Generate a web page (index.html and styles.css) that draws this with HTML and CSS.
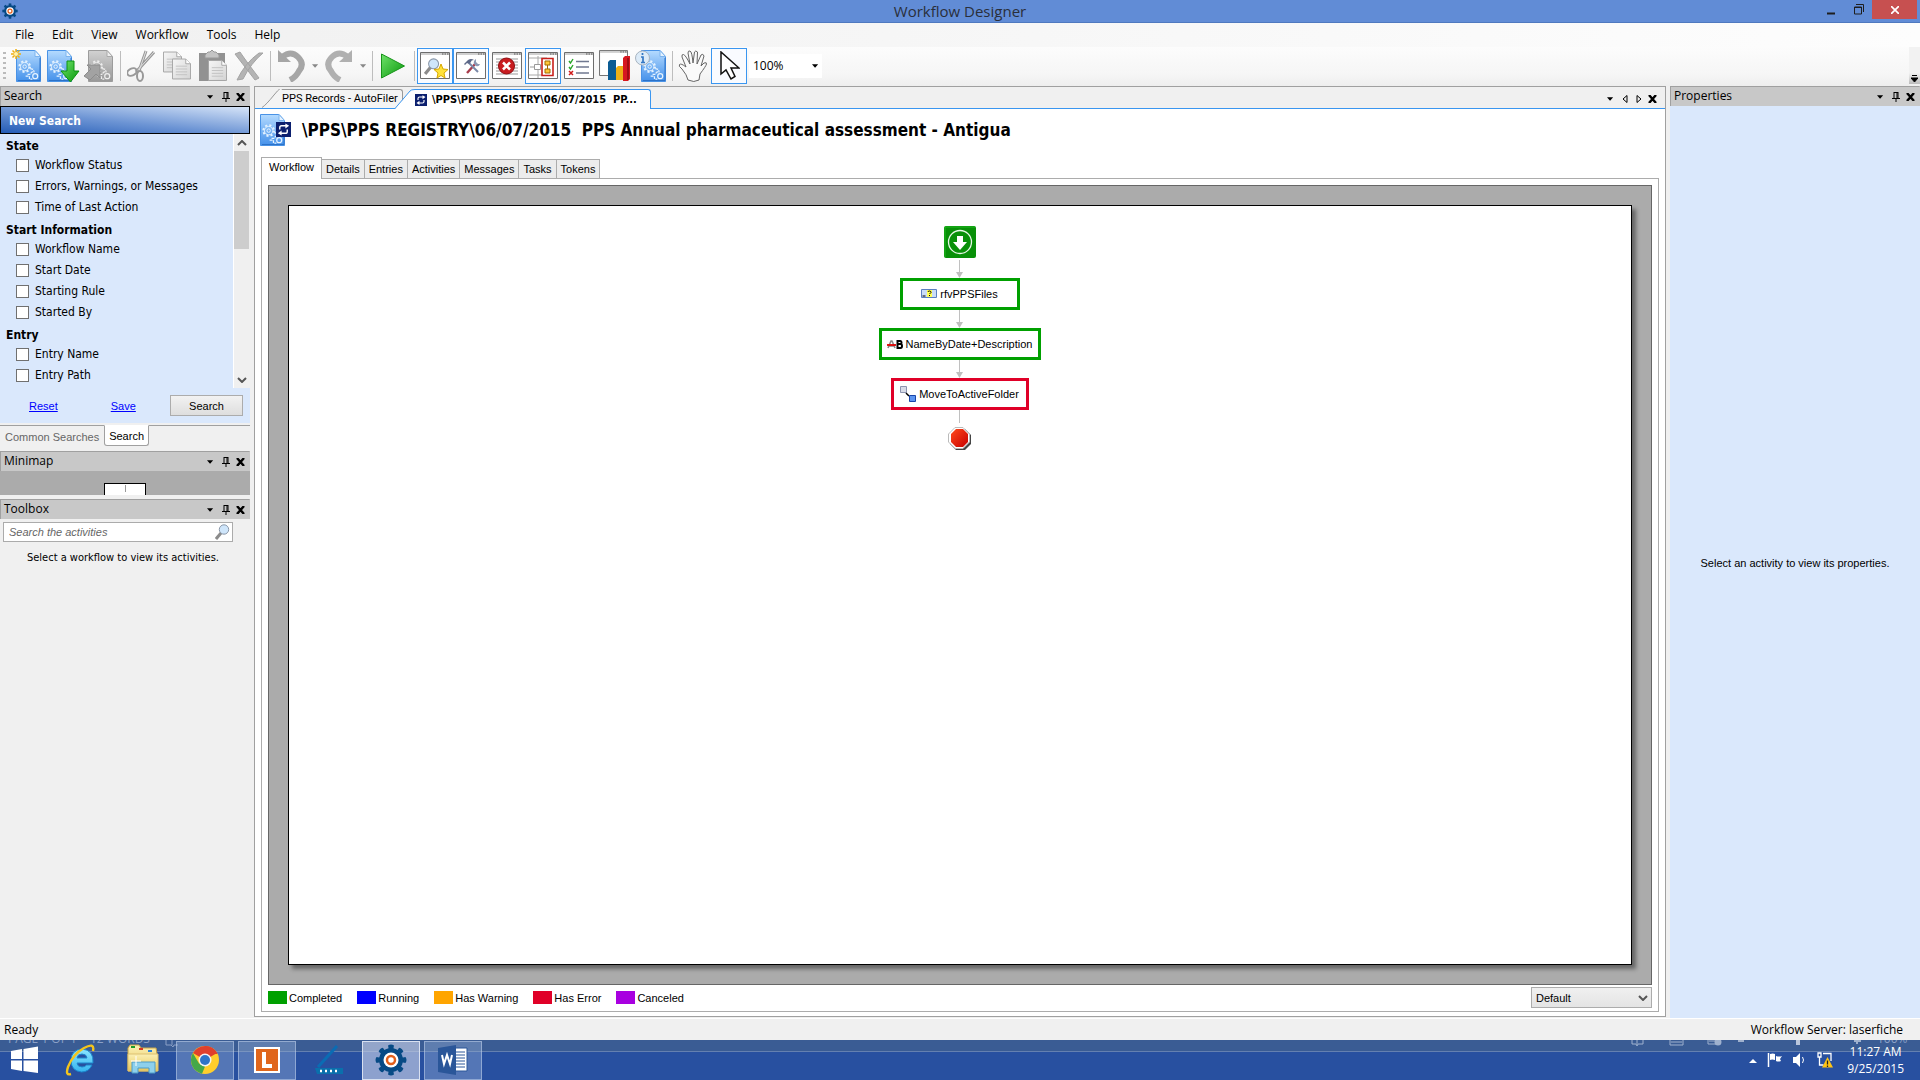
FILE: index.html
```html
<!DOCTYPE html>
<html lang="en">
<head>
<meta charset="utf-8">
<title>Workflow Designer</title>
<link rel="stylesheet" href="styles.css">
</head>
<body>
<svg class="defs" aria-hidden="true">
  <defs>
    <linearGradient id="gBlue" x1="0" y1="0" x2="0" y2="1"><stop offset="0" stop-color="#b5dbff"/><stop offset="1" stop-color="#4390ea"/></linearGradient>
    <linearGradient id="gGrey" x1="0" y1="0" x2="0" y2="1"><stop offset="0" stop-color="#d2d2d2"/><stop offset="1" stop-color="#989898"/></linearGradient>
    <linearGradient id="gGreen" x1="0" y1="0" x2="1" y2="1"><stop offset="0" stop-color="#6fe26a"/><stop offset="1" stop-color="#09980c"/></linearGradient>
    <linearGradient id="gPaper" x1="0" y1="0" x2="1" y2="1"><stop offset="0" stop-color="#f6f6f6"/><stop offset="1" stop-color="#d4d4d4"/></linearGradient>
    <linearGradient id="gFolder" x1="0" y1="0" x2="0" y2="1"><stop offset="0" stop-color="#fbf0b4"/><stop offset="1" stop-color="#e8c75c"/></linearGradient>
    <linearGradient id="gIe" x1="0" y1="0" x2="0" y2="1"><stop offset="0" stop-color="#8be6ff"/><stop offset="1" stop-color="#35b4f0"/></linearGradient>
    <linearGradient id="gStop" x1="0" y1="0" x2="1" y2="1"><stop offset="0" stop-color="#ff4a1c"/><stop offset="1" stop-color="#c80000"/></linearGradient>
    <symbol id="gears" viewBox="0 0 24 24">
      <g fill="none" stroke="currentColor">
        <circle cx="8" cy="9" r="5.6" stroke-width="2" stroke-dasharray="2.2 2.2"/>
        <circle cx="8" cy="9" r="4.4"/><circle cx="8" cy="9" r="1.8"/>
        <circle cx="19" cy="19" r="2.6" stroke-width="1.3"/>
        <path d="M11 17h3l1-2 2-1M9 19h4v3h3M14 11l3 1 1 3" stroke-width="1.3" stroke-dasharray="3 1"/>
      </g>
    </symbol>
    <symbol id="doc" viewBox="0 0 25 32">
      <path d="M.5.5H19l5.500 6v25H.5z" fill="url(#gBlue)" stroke="#4a93e6"/>
      <path d="M19 .5l5.500 6H19z" fill="#e4f2ff" stroke="#7db4ee"/>
      <path d="M2 30.500h22V8" fill="none" stroke="#2c72c8"/>
      <use href="#gears" x="1" y="8" width="23" height="23" color="#e6f3ff"/>
    </symbol>
    <symbol id="docgrey" viewBox="0 0 25 32">
      <path d="M.5.5H19l5.500 6v25H.5z" fill="url(#gGrey)" stroke="#9c9c9c"/>
      <path d="M19 .5l5.500 6H19z" fill="#eee" stroke="#aaa"/>
      <use href="#gears" x="1" y="8" width="23" height="23" color="#eee"/>
    </symbol>
    <symbol id="win" viewBox="0 0 30 27">
      <path d="M.5.5h29v26H.5z" fill="#fff" stroke="#6d6d6d"/><path d="M1 1h28v2H1z" fill="#d0d0d0"/>
      <path d="M22 2h1.500m1 0H26m1 0h1.500" stroke="#555"/>
    </symbol>
    <symbol id="sheet" viewBox="0 0 20 22">
      <path d="M.5.5h14l5 5v16H.5z" fill="url(#gPaper)" stroke="#a4a4a4"/><path d="M14.500.5v5h5" fill="#fff" stroke="#a4a4a4"/>
      <path d="M4 8h12M4 11h12M4 14h12M4 17h12" stroke="#c2c2c2"/>
    </symbol>
    <symbol id="gear" viewBox="0 0 32 32">
      <g fill="#074a85"><circle cx="16" cy="16" r="12"/>
        <path id="t" d="M13 1.500q3-2 6 0l-1 5h-4z"/><use href="#t" transform="rotate(45 16 16)"/><use href="#t" transform="rotate(90 16 16)"/><use href="#t" transform="rotate(135 16 16)"/><use href="#t" transform="rotate(180 16 16)"/><use href="#t" transform="rotate(225 16 16)"/><use href="#t" transform="rotate(270 16 16)"/><use href="#t" transform="rotate(315 16 16)"/></g>
      <circle cx="16" cy="16" r="7.500" fill="#fff"/><circle cx="16" cy="16" r="4" fill="none" stroke="#e2601c" stroke-width="2.500"/>
    </symbol>
    <symbol id="down" viewBox="0 0 8 4"><path d="M0 0h7L3.500 4z" fill="currentColor"/></symbol>
    <symbol id="pin" viewBox="0 0 8 10"><path d="M2 .5h4M2 0v6M5 0v6M6 0v6M0 6.500h8M4 6v4" stroke="#000" fill="none"/></symbol>
    <symbol id="x" viewBox="0 0 9 8"><path d="M1 0l7 8M8 0L1 8" stroke="#000" stroke-width="2.400"/></symbol>
    <symbol id="chev" viewBox="0 0 10 6"><path d="M1 1l4 4 4-4" stroke="#555" stroke-width="2" fill="none"/></symbol>
    <symbol id="sync" viewBox="0 0 16 16"><path d="M0 0h16v16H0z" fill="#0b1f6e"/><path d="M4 8V6q0-2 2-2h5M12 8v2q0 2-2 2H5" fill="none" stroke="#fff" stroke-width="1.500"/><path d="M10 1.500l4 2.500-4 3zM6 9l-4 3 4 2.500z" fill="#fff"/></symbol>
    <symbol id="lens" viewBox="0 0 15 16"><path d="M6 9L1 15" stroke="#8b8b8b" stroke-width="3"/><circle cx="9" cy="5.500" r="4.700" fill="#cfe6fb" stroke="#8a97a8"/></symbol>
  </defs>
</svg>

<header class="titlebar">
  <svg class="app-icon" width="16" height="16"><use href="#gear"/></svg>
  <h1 class="app-title">Workflow Designer</h1>
  <div class="win-buttons">
    <button class="win-btn" aria-label="Minimize"><svg width="9" height="10"><path d="M0 8.500h8" stroke="#1e1e1e" stroke-width="2"/></svg></button>
    <button class="win-btn" aria-label="Restore"><svg width="10" height="11"><path d="M.5 3h7v7h-7zM0 3.500h8M2 .5h7.500V8" fill="none" stroke="#1e1e1e"/></svg></button>
    <button class="win-btn close" aria-label="Close"><svg width="8" height="8"><path d="M0 0l8 8M8 0L0 8" stroke="#fff" stroke-width="1.700"/></svg></button>
  </div>
</header>

<nav class="menubar">
  <button>File</button><button>Edit</button><button>View</button><button>Workflow</button><button>Tools</button><button>Help</button>
</nav>

<div class="toolbar" role="toolbar">
  <span class="grip"></span>
  <button class="tool" aria-label="New workflow"><svg width="32" height="34" viewBox="0 0 32 34"><use href="#doc" x="5" y="1" width="25" height="32"/><g stroke="#f0b010" stroke-width="1.500"><path d="M5 0v10M0 5h10M1.500 1.500l7 7M8.500 1.500l-7 7"/></g><circle cx="5" cy="5" r="2" fill="#fff3b0"/></svg></button>
  <button class="tool" aria-label="Open workflow"><svg width="34" height="34" viewBox="0 0 34 34"><use href="#doc" x="1" y="1" width="25" height="32"/><path d="M21 12h7v10h5l-8.500 11L15 22h6z" fill="url(#gGreen)" stroke="#0d9310"/></svg></button>
  <button class="tool" aria-label="Import"><svg width="32" height="34" viewBox="0 0 32 34"><use href="#docgrey" x="5" y="1" width="25" height="32"/><path d="M1 27l7-7-4-4h13v13l-4-4-6 6z" fill="#a2a2a2" stroke="#8c8c8c"/></svg></button>
  <span class="sep"></span>
  <button class="tool" aria-label="Cut"><svg width="28" height="32" viewBox="0 0 28 32"><path d="M19 1L12 21M27 2L9 22" stroke="#999" stroke-width="3"/><path d="M19 1L12 21M27 2L9 22" stroke="#e0e0e0"/><ellipse cx="5" cy="22" rx="5" ry="3.500" fill="none" stroke="#999" stroke-width="2" transform="rotate(-25 5 22)"/><ellipse cx="13" cy="26" rx="3" ry="5" fill="none" stroke="#999" stroke-width="2"/></svg></button>
  <button class="tool" aria-label="Copy"><svg width="30" height="32" viewBox="0 0 30 32"><use href="#sheet" x="1" y="0" width="19" height="24"/><use href="#sheet" x="10" y="7" width="19" height="24"/></svg></button>
  <button class="tool" aria-label="Paste"><svg width="30" height="32" viewBox="0 0 30 32"><path d="M1 3h26v28H1z" fill="#929292"/><path d="M7 5l3-3h2l2-2 2 2h2l3 3v3H7z" fill="#c4c4c4" stroke="#999"/><use href="#sheet" x="10" y="9" width="19" height="23"/></svg></button>
  <button class="tool" aria-label="Delete"><svg width="32" height="30" viewBox="0 0 32 30"><path d="M2 3l5-2q6 9 19 26l-4 2Q12 16 2 3zM30 2Q18 12 10 28l-6 1Q12 12 26 2z" fill="#b4b4b4" stroke="#a4a4a4"/></svg></button>
  <span class="sep"></span>
  <button class="tool" aria-label="Undo"><svg width="28" height="32" viewBox="0 0 28 32"><path d="M5 7Q14 0 21 7t1 14q-3 6-9 9" fill="none" stroke="#a6a6a6" stroke-width="6"/><path d="M1 0v12h13z" fill="#a6a6a6"/></svg></button>
  <button class="drop" aria-label="Undo list"><svg width="7" height="4"><use href="#down"/></svg></button>
  <button class="tool" aria-label="Redo"><svg width="28" height="32" viewBox="0 0 28 32"><path d="M23 7Q14 0 7 7T6 21q3 6 9 9" fill="none" stroke="#b0b0b0" stroke-width="6"/><path d="M27 0v12H14z" fill="#b0b0b0"/></svg></button>
  <button class="drop" aria-label="Redo list"><svg width="7" height="4"><use href="#down"/></svg></button>
  <span class="sep"></span>
  <button class="tool" aria-label="Run"><svg width="26" height="28" viewBox="0 0 26 28"><path d="M1.500 2l23 12-23 12z" fill="url(#gGreen)" stroke="#18941a"/></svg></button>
  <span class="sep"></span>
  <button class="tool on" aria-label="Search pane"><svg width="30" height="28" viewBox="0 0 30 28"><use href="#win" width="30" height="27"/><use href="#lens" x="4" y="6" width="16" height="17"/><path d="M21 12l2 5 5 .5-4 3.500 1 5-4-2.500-4 2.500 1-5-4-3.500 5-.5z" fill="#ffe23a" stroke="#d8a800"/></svg></button>
  <button class="tool on" aria-label="Toolbox pane"><svg width="30" height="28" viewBox="0 0 30 28"><use href="#win" width="30" height="27"/><path d="M20 11l-9 10" stroke="#a83c4c" stroke-width="2.400"/><path d="M13 11l9 9" stroke="#7a88a8" stroke-width="2"/><path d="M8 12l4-4q3-2 6 0-3 0-3 2l-2 2-2-1-2 2z" fill="#5c6888"/><path d="M20 7v3l2 2h2q-1 3-4 2l-2-2q-1-3 2-5z" fill="#8c98b4"/></svg></button>
  <button class="tool" aria-label="Errors pane"><svg width="30" height="28" viewBox="0 0 30 28"><use href="#win" width="30" height="27"/><path d="M4 7h22M4 10h22M4 13h22M4 16h22M4 19h22M4 22h22" stroke="#999"/><circle cx="14.500" cy="14" r="8" fill="#c81c20" stroke="#8f1014"/><path d="M11 10.500l7 7M18 10.500l-7 7" stroke="#fff" stroke-width="2.500"/></svg></button>
  <button class="tool on" aria-label="Minimap pane"><svg width="30" height="28" viewBox="0 0 30 28"><use href="#win" width="30" height="27"/><path d="M10 4v22M1 6h18M1 23h18" stroke="#aaa"/><path d="M6.500 12.500h6v5h-6zM2 15h4" fill="#fff" stroke="#999"/><path d="M14 6.500h11v17H14z" fill="#fff" stroke="#c8201c" stroke-width="1.600"/><path d="M17 9h5v4h-5zM17 17h5v4h-5zM19.500 13v4" fill="#ffc83a" stroke="#a06a00"/></svg></button>
  <button class="tool" aria-label="Rules"><svg width="30" height="28" viewBox="0 0 30 28"><use href="#win" width="30" height="27"/><path d="M12 9.500h13M12 15h13M12 21h13" stroke="#707890" stroke-width="1.400"/><path d="M5 9l1.500 2L9 7M5 15l1.500 2L9 13" stroke="#28a428" fill="none" stroke-width="1.400"/><path d="M5 19l4 4M9 19l-4 4" stroke="#d01c1c" stroke-width="1.500"/></svg></button>
  <button class="tool" aria-label="Reports"><svg width="32" height="32" viewBox="0 0 32 32"><use href="#win" width="29" height="26"/><path d="M9 12l2-2h6v20H9z" fill="#0c5c94"/><path d="M17 18l2-2h6v14h-8z" fill="#eeb018"/><path d="M24 8l2-2h5v23l-2 2h-5z" fill="#d61820"/><path d="M29 8v22" stroke="#8e0a10" stroke-width="1.500"/></svg></button>
  <button class="tool" aria-label="Workflow information"><svg width="32" height="34" viewBox="0 0 32 34"><use href="#doc" x="6" y="1" width="25" height="32"/><circle cx="7.500" cy="9" r="7" fill="#dcebf8" stroke="#a8b4c0"/><path d="M7.500 4v2M6 8h2v5M6 13.500h4" stroke="#3478c4" stroke-width="1.700" fill="none"/></svg></button>
  <span class="sep"></span>
  <button class="tool" aria-label="Pan"><svg width="30" height="32" viewBox="0 0 30 32"><path d="M10 30Q9 25 4 19q-4-3-2.500-4.500T8 17L4 7q-.5-3 1.500-2.500T12 14L10 3q0-2.500 2-2t3 12l1.500-11q1-2 3 0L19 14l4-9q2-2 3 1l-3 10 3-3q3-1 2.500 1T22 24l-1 6q-5 3-11 0z" fill="#fafafa" stroke="#666"/></svg></button>
  <button class="tool on" aria-label="Select"><svg width="22" height="30" viewBox="0 0 22 30"><path d="M3 1v22l5-4 5 9 4-2.500-4-8.500h8z" fill="#fff" stroke="#111" stroke-width="1.500"/></svg></button>
  <div class="zoom"><input value="100%" aria-label="Zoom"><button aria-label="Zoom list"><svg width="7" height="4"><use href="#down"/></svg></button></div>
  <button class="overflow" aria-label="Toolbar options"><svg width="7" height="7"><path d="M1 .5h5M0 3h7L3.500 7z" stroke="#000" stroke-width="1"/></svg></button>
</div>

<main class="work">
  <aside class="left">
    <section class="dock">
      <header class="dock-head"><h2>Search</h2><button aria-label="Menu"><svg width="7" height="4"><use href="#down"/></svg></button><button aria-label="Pin"><svg width="8" height="10"><use href="#pin"/></svg></button><button aria-label="Close"><svg width="9" height="8"><use href="#x"/></svg></button></header>
      <h3 class="new-search">New Search</h3>
      <div class="criteria-wrap">
        <form class="criteria">
          <h4>State</h4>
          <label><input type="checkbox">Workflow Status</label>
          <label><input type="checkbox">Errors, Warnings, or Messages</label>
          <label><input type="checkbox">Time of Last Action</label>
          <h4>Start Information</h4>
          <label><input type="checkbox">Workflow Name</label>
          <label><input type="checkbox">Start Date</label>
          <label><input type="checkbox">Starting Rule</label>
          <label><input type="checkbox">Started By</label>
          <h4>Entry</h4>
          <label><input type="checkbox">Entry Name</label>
          <label><input type="checkbox">Entry Path</label>
        </form>
        <div class="scrollbar">
          <svg class="flip" width="10" height="6"><use href="#chev"/></svg><span class="thumb"></span><svg width="10" height="6"><use href="#chev"/></svg>
        </div>
      </div>
      <div class="search-actions"><a href="#reset">Reset</a><a href="#save">Save</a><button>Search</button></div>
      <div class="dock-tabs"><button>Common Searches</button><button class="current">Search</button></div>
    </section>
    <section class="dock">
      <header class="dock-head"><h2>Minimap</h2><button aria-label="Menu"><svg width="7" height="4"><use href="#down"/></svg></button><button aria-label="Pin"><svg width="8" height="10"><use href="#pin"/></svg></button><button aria-label="Close"><svg width="9" height="8"><use href="#x"/></svg></button></header>
      <div class="minimap"><div class="mini-page"></div></div>
    </section>
    <section class="dock">
      <header class="dock-head"><h2>Toolbox</h2><button aria-label="Menu"><svg width="7" height="4"><use href="#down"/></svg></button><button aria-label="Pin"><svg width="8" height="10"><use href="#pin"/></svg></button><button aria-label="Close"><svg width="9" height="8"><use href="#x"/></svg></button></header>
      <div class="activity-search"><input placeholder="Search the activities" aria-label="Search the activities"><svg width="15" height="16"><use href="#lens"/></svg></div>
      <p class="hint">Select a workflow to view its activities.</p>
    </section>
  </aside>

  <section class="center">
    <div class="doc-tabs">
      <button class="doc-tab first"><svg class="slant" width="20" height="19"><path d="M0 19Q5 16 12 6T20 .5V19z" fill="#f4f4f4"/><path d="M0 18.500Q4 16 12 6T20 .5" fill="none" stroke="#999"/></svg><span class="doc-label">PPS Records - AutoFiler</span></button>
      <button class="doc-tab active"><svg class="slant" width="20" height="20"><path d="M0 20L15 2Q16 .5 20 .5V20z" fill="#fff"/><path d="M0 19.500L15 2Q16 .5 20 .5" fill="none" stroke="#3a96f0"/></svg><span class="doc-label"><svg width="12" height="12"><use href="#sync"/></svg><span>\PPS\PPS REGISTRY\06/07/2015&nbsp; PP...</span></span></button>
      <div class="doc-nav"><button aria-label="List"><svg width="7" height="4"><use href="#down"/></svg></button><button aria-label="Previous"><svg width="6" height="8"><path d="M5 .5v7L1 4z" fill="none" stroke="#000"/></svg></button><button aria-label="Next"><svg width="6" height="8"><path d="M1 .5v7L5 4z" fill="none" stroke="#000"/></svg></button><button aria-label="Close"><svg width="9" height="8"><use href="#x"/></svg></button></div>
    </div>
    <div class="doc-head">
      <svg width="32" height="34" viewBox="0 0 32 34"><use href="#doc" x="0" y="1" width="25" height="32"/><use href="#sync" x="16" y="9" width="15" height="15"/></svg>
      <h2>\PPS\PPS REGISTRY\06/07/2015&nbsp; PPS Annual pharmaceutical assessment - Antigua</h2>
    </div>
    <div class="page-tabs" role="tablist"><button class="current" role="tab">Workflow</button><button role="tab">Details</button><button role="tab">Entries</button><button role="tab">Activities</button><button role="tab">Messages</button><button role="tab">Tasks</button><button role="tab">Tokens</button></div>
    <div class="pane">
      <div class="canvas">
        <div class="page">
          <div class="flow">
            <svg width="32" height="32" viewBox="0 0 32 32"><rect width="32" height="32" rx="2" fill="#089008"/><path d="M1 31V1h30" fill="none" stroke="#1fb81f"/><circle cx="16" cy="16" r="11.500" fill="none" stroke="#e8f8e8" stroke-width="1.300"/><path d="M13 10h6v6h4l-7 8-7-8h4z" fill="#fff"/></svg>
            <svg class="link lead" width="7" height="18"><path d="M3.500 0v14" stroke="#c0c0c0"/><path d="M0 12h7l-3.500 6z" fill="#c0c0c0"/></svg>
            <div class="node ok n1"><svg width="16" height="10"><path d="M.5.5h15v8H.5z" fill="#c9dcf8" stroke="#5a7ec0"/><path d="M6 1h5v7H6z" fill="#ff5"/><path d="M7 3q0-1 1.500-1T10 3.500L8.500 5M8.500 6v1M1.500 7h3" fill="none" stroke="#000"/></svg>rfvPPSFiles</div>
            <svg class="link" width="7" height="18"><path d="M3.500 0v14" stroke="#c0c0c0"/><path d="M0 12h7l-3.500 6z" fill="#c0c0c0"/></svg>
            <div class="node ok n2"><svg width="16" height="9" viewBox="0 0 16 9"><path d="M1 8l3-7h1l3 7M2 6h5" fill="none" stroke="#888" stroke-width="1.600"/><path d="M0 5h9" stroke="#e00000" stroke-width="1.800"/><path d="M10.500 1h3q1 0 1 1.500T13 4h-3 3.500q1.500 0 1.500 2t-1.500 2h-3z" fill="none" stroke="#000" stroke-width="2"/></svg>NameByDate+Description</div>
            <svg class="link" width="7" height="18"><path d="M3.500 0v14" stroke="#c0c0c0"/><path d="M0 12h7l-3.500 6z" fill="#c0c0c0"/></svg>
            <div class="node bad n3"><svg width="16" height="16"><path d="M.5.5h6v6h-6z" fill="#d8dce8" stroke="#8c94b0"/><path d="M6 7l3 3" stroke="#000" stroke-width="1.500"/><path d="M9.500 9.500h6v6h-6z" fill="#5c94f0" stroke="#1844a8"/></svg>MoveToActiveFolder</div>
            <svg class="link" width="7" height="13"><path d="M3.500 0v13" stroke="#c0c0c0"/></svg>
            <svg class="stop" width="24" height="24" viewBox="0 0 24 24"><path d="M8 2h9l6 6v9l-6 6H8l-6-6V8z" fill="#444"/><path d="M7 .5h8L21.500 7v8L15 21.500H7L.5 15V7z" fill="#fff" stroke="#bbb"/><path d="M8 2h7l5 5v8l-5 5H8l-5-5V7z" fill="url(#gStop)"/></svg>
          </div>
        </div>
      </div>
      <footer class="legend">
        <ul><li><i class="c-done"></i>Completed</li><li><i class="c-run"></i>Running</li><li><i class="c-warn"></i>Has Warning</li><li><i class="c-err"></i>Has Error</li><li><i class="c-cancel"></i>Canceled</li></ul>
        <div class="select"><select aria-label="View"><option>Default</option></select><svg width="10" height="6"><use href="#chev"/></svg></div>
      </footer>
    </div>
  </section>

  <aside class="right">
    <header class="dock-head"><h2>Properties</h2><button aria-label="Menu"><svg width="7" height="4"><use href="#down"/></svg></button><button aria-label="Pin"><svg width="8" height="10"><use href="#pin"/></svg></button><button aria-label="Close"><svg width="9" height="8"><use href="#x"/></svg></button></header>
    <p class="props">Select an activity to view its properties.</p>
  </aside>
</main>

<footer class="statusbar"><span>Ready</span><span>Workflow Server: laserfiche</span></footer>

<footer class="taskbar">
  <div class="ghost">
    <span class="g1">PAGE 1 OF 1</span><span class="g2">12 WORDS</span>
    <svg width="14" height="12"><path d="M1 0v5h5l2 2 1-2h4M7 0v5" stroke="#8ba0c6" fill="none"/></svg>
    <svg class="g-views" width="246" height="12"><path d="M1 0v4h4l1 2 1-2h5V0M6 0v4M39 0v5h13V0M40 2h11M77 0v4h8M78 1h6" stroke="#9fb1ce" fill="none"/><circle cx="87" cy="2" r="3.500" fill="#9fb1ce"/><path d="M107 1h6M223 1h7M226 0v4" stroke="#9fb1ce" stroke-width="2"/><path d="M165 0h4v5h-4z" fill="#b9c6dc"/></svg>
    <span class="g3">100%</span>
  </div>
  <button class="task start" aria-label="Start"><svg width="28" height="28" viewBox="0 0 28 28"><path d="M0 5l11-2v10H0zM12.500 3L27 .5V13H12.500zM0 14.500h11V25L0 23zM12.500 14.500H27V27l-14.500-2z" fill="#fff"/></svg></button>
  <button class="task" aria-label="Internet Explorer"><svg width="32" height="32" viewBox="0 0 32 32"><path d="M27 21Q24 28 16.500 28 6 27 6 16.500T17 5q12 1 11 14H12q.5 4 5 4 3 0 4.500-2zM12 14h10q-.5-4-5-4t-5 4z" fill="url(#gIe)" stroke="#1c86cc"/><path d="M6 30Q0 32 3 23 8 10 19 4q11-6 9 3" fill="none" stroke="#f4c41c" stroke-width="2.400"/></svg></button>
  <button class="task" aria-label="File Explorer"><svg width="34" height="32" viewBox="0 0 34 32"><path d="M2 4l2-3h9l2 3h15l1 6v17H2z" fill="url(#gFolder)" stroke="#c8a444"/><path d="M5 2h4v2H5z" fill="#1c9c28"/><path d="M13 4h4v2h-4z" fill="#d83820"/><path d="M22 6h4v2h-4z" fill="#2c84d8"/><path d="M2 10h30v17H2z" fill="url(#gFolder)" stroke="#dcc070"/><path d="M6 18h23v11h-6v-5H12v5H6z" fill="#8ed0ec" stroke="#4c9cc8"/><path d="M10 12v10M5 17h10" stroke="#fff"/></svg></button>
  <button class="task open" aria-label="Chrome"><svg width="30" height="30" viewBox="0 0 30 30"><circle cx="15" cy="15" r="14" fill="#ffce2c"/><path d="M15 15L2.900 8a14 14 0 0 1 24.200 0z" fill="#e0402c"/><path d="M15 1a14 14 0 0 1 12.500 8H15z" fill="#e0402c"/><path d="M2.900 8L9 18.500l6 3-3 7.200A14 14 0 0 1 2.900 8z" fill="#45a849"/><circle cx="15" cy="15" r="6.500" fill="#f4f4f4"/><circle cx="15" cy="15" r="5" fill="#2f74c8"/></svg></button>
  <button class="task open" aria-label="Laserfiche"><svg width="26" height="26" viewBox="0 0 26 26"><path d="M0 0h26v26H0z" fill="#fff"/><path d="M2 2h22v22H2z" fill="#e0661c"/><path d="M8 5h4v12h6v4H8z" fill="#fff"/></svg></button>
  <button class="task" aria-label="Scanner"><svg width="28" height="30" viewBox="0 0 28 30"><path d="M3 22L22 1" stroke="#0a6cb4" stroke-width="3"/><path d="M0 23h28v6H2z" fill="#0a70ac"/><path d="M5 26h2M10 26h2M15 26h2M20 26h2" stroke="#fff" stroke-width="2.500"/></svg></button>
  <button class="task open front" aria-label="Workflow Designer"><svg width="32" height="32"><use href="#gear"/></svg></button>
  <button class="task open" aria-label="Word"><svg width="30" height="30" viewBox="0 0 30 30"><path d="M16 3h13v23H16z" fill="#fff" stroke="#2a5699"/><path d="M18 7h9M18 10h9M18 13h9M18 16h9M18 19h9M18 22h9" stroke="#2a5699"/><path d="M0 3l18-3v30L0 27z" fill="#2a5699"/><path d="M4 10l2 9 3-9 3 9 2-9" fill="none" stroke="#fff" stroke-width="2"/></svg></button>
  <div class="tray">
    <svg width="8" height="5"><path d="M0 5l4-4 4 4z" fill="#fff"/></svg>
    <svg width="16" height="16"><path d="M1.500 1v14" stroke="#fff" stroke-width="1.500"/><path d="M3 2q3-1 5 0v6q-3-1-5 0zM9 4q3 1 6 0l-2 3 1 2q-3 1-5 0z" fill="#fff"/></svg>
    <svg width="14" height="14"><path d="M0 4h3l4-4v14l-4-4H0z" fill="#fff"/><path d="M9.500 4q2 3 0 6" stroke="#fff" fill="none"/></svg>
    <svg width="16" height="16"><path d="M1 1h3v4H1zM2.500 5v8h4M6 1.500h8V9" fill="none" stroke="#fff" stroke-width="1.300"/><path d="M10.500 5L16 15.500H5z" fill="#ffc414"/><path d="M10.500 8.500v4m0 1v1.500" stroke="#222" stroke-width="1.300"/></svg>
    <time class="clock"><span>11:27 AM</span><span>9/25/2015</span></time>
  </div>
</footer>
</body>
</html>
```
FILE: styles.css
```css
:root {
  --ui: "Open Sans", "Noto Sans", sans-serif;
  --tahoma: "DejaVu Sans Condensed", "DejaVu Sans", sans-serif;
  --sans: "Liberation Sans", Arial, sans-serif;
  --face: #f0f0f0;
  --pale: #dae8fc;
  --line: #a0a0a0;
  --blue: #3a96f0;
}
* { box-sizing: border-box; margin: 0; padding: 0; }
body { display: flex; flex-direction: column; height: 100vh; overflow: hidden; background: var(--face); font: 12px/16px var(--ui); color: #000; }
button, input, select { font: inherit; color: inherit; background: none; border: 0; border-radius: 0; outline: 0; }
svg { display: block; flex: none; }
.defs { position: absolute; width: 0; height: 0; }
h1, h2, h3, h4 { font-size: inherit; font-weight: normal; }

.titlebar { display: grid; grid-template-columns: 1fr auto 1fr; height: 23px; flex: none; background: #618cd6; border-bottom: 1px solid #4f79bf; }
.app-icon { margin: 3px 2px; }
.app-title { font-size: 15px; line-height: 22px; color: #2a2f3a; }
.win-buttons { display: flex; justify-content: flex-end; padding-right: 3px; }
.win-btn { display: flex; justify-content: center; align-items: center; width: 27px; height: 19px; }
.win-btn.close { width: 45px; background: #c75050; }

.menubar { display: flex; height: 24px; flex: none; padding-left: 8px; background: linear-gradient(to right, #f0f0f0, #fdfdfd); }
.menubar button { padding: 0 7px; margin-right: 4px; }

.toolbar { display: flex; align-items: center; height: 39px; flex: none; background: linear-gradient(#fcfcfc, #f6f6f6 70%, #eee); padding-bottom: 2px; }
.grip { width: 3px; height: 28px; margin: 0 3px; background: repeating-linear-gradient(#bbb 0 2px, transparent 2px 5px); }
.tool { display: flex; justify-content: center; align-items: center; width: 36px; height: 36px; flex: none; border: 1px solid transparent; }
.tool.on { border-color: var(--blue); background: #f9fbff; }
.sep { width: 1px; height: 30px; margin: 0 2px 0 3px; background: #bdbdbd; }
.drop { display: flex; justify-content: center; width: 12px; color: #888; }
.zoom { display: flex; align-items: center; width: 73px; height: 24px; margin-left: 2px; background: #fff; }
.zoom input { width: 63px; padding-left: 4px; font: 12px/16px var(--ui); }
.overflow { display: flex; justify-content: center; align-items: flex-end; width: 11px; height: 37px; margin-left: auto; padding-bottom: 2px; background: linear-gradient(#f2f2f2 70%, #bbb); }

.work { display: grid; grid-template-columns: 250px minmax(0, 1fr) 250px; gap: 4px; flex: 1; min-height: 0; }
.left { display: flex; flex-direction: column; gap: 4px; }
.dock-head { display: flex; align-items: center; height: 20px; padding: 0 1px 0 3px; background: #c8c8c8; border: 1px solid var(--line); border-bottom: 0; border-right-color: #c8c8c8; }
.dock-head h2 { flex: 1; line-height: 16px; padding-bottom: 2px; }
.dock-head button { display: flex; justify-content: center; align-items: center; width: 15px; height: 14px; }
.new-search { height: 28px; padding-left: 8px; border: 1px solid #000; background: linear-gradient(to top right, #245cb6, #6c94d4 45%, #d6e4f8); font: bold 12px/28px var(--tahoma); color: #fff; }
.criteria-wrap { display: flex; height: 254px; background: var(--pale); }
.criteria { flex: 1; padding-left: 6px; font: 12px/21px var(--tahoma); }
.criteria h4 { height: 21px; font-weight: bold; line-height: 24px; }
.criteria label { display: flex; align-items: center; gap: 6px; height: 21px; padding-left: 10px; font-size: 12px; }
.criteria input { appearance: none; width: 13px; height: 13px; border: 1px solid #707070; background: #fff; }
.scrollbar { display: flex; flex-direction: column; align-items: center; width: 17px; padding: 6px 1px 5px 0; background: var(--face); border-left: 1px solid #fff; }
.flip { transform: rotate(180deg); }
.thumb { width: 15px; height: 98px; margin: 5px 0 auto; background: #cdcdcd; }
.search-actions { display: flex; align-items: center; height: 35px; padding: 0 7px 0 29px; background: var(--pale); font: 11px/16px var(--sans); }
.search-actions a { flex: none; margin-right: 53px; color: #00f; }
.search-actions a + a { margin-right: 0; }
.search-actions button { width: 73px; height: 21px; margin-left: auto; background: linear-gradient(#f2f2f2, #dedede); border: 1px solid #acacac; }
.dock-tabs { display: flex; height: 22px; margin-top: 2px; border-top: 1px solid var(--line); font: 11px/16px var(--sans); }
.dock-tabs button { height: 21px; padding: 0 5px; color: #666; }
.dock-tabs .current { margin-top: -1px; background: #fff; border: 1px solid var(--line); border-top-color: #fff; border-radius: 0 0 3px 3px; color: #000; padding: 0 4px; }
.minimap { display: flex; justify-content: center; align-items: flex-end; height: 24px; background: #ababab; }
.mini-page { width: 42px; height: 12px; border: 1px solid #000; border-bottom: 0; background: #fff linear-gradient(#999, #999) 20px 1px / 1px 7px no-repeat; }
.activity-search { display: flex; align-items: center; width: 230px; height: 20px; margin: 3px 0 0 3px; padding: 0 2px 0 5px; background: #fff; border: 1px solid #ababab; }
.activity-search input { flex: 1; font: italic 11px/16px var(--sans); }
.activity-search input::placeholder { color: #666; }
.hint { margin-top: 8px; padding-right: 4px; text-align: center; font: 11px/16px var(--tahoma); }

.center { display: flex; flex-direction: column; min-width: 0; margin-bottom: 1px; border: 1px solid var(--line); background: #fff; }
.doc-tabs { display: flex; align-items: flex-end; height: 22px; padding-left: 7px; background: linear-gradient(var(--blue), var(--blue)) 0 100% / 100% 1px no-repeat, var(--face); }
.doc-tab { display: flex; height: 19px; }
.doc-tab .doc-label { display: flex; align-items: center; gap: 5px; height: 100%; border: 1px solid #999; border-width: 1px 1px 0 0; border-radius: 0 3px 0 0; }
.first { margin-bottom: 1px; }
.first .doc-label { width: 121px; font: 11px/16px Roboto, var(--sans); background: #f4f4f4; }
.active { margin-left: -8px; }
.active.doc-tab { height: 20px; }
.active .doc-label { width: 236px; background: #fff; border-color: var(--blue); font: bold 11px/16px var(--tahoma); white-space: nowrap; }
.doc-nav { display: flex; align-items: center; gap: 1px; height: 20px; margin: 0 6px 0 auto; }
.doc-nav button { display: flex; justify-content: center; width: 13px; }
.doc-head { display: flex; align-items: center; gap: 10px; height: 38px; margin: 2px 0 8px 5px; }
.doc-head h2 { font: bold 17px/20px var(--tahoma); white-space: nowrap; }
.page-tabs { display: flex; align-items: flex-end; height: 21px; margin-left: 6px; font: 11px/16px var(--sans); }
.page-tabs button { height: 19px; padding: 0 4px; background: #ececec; border: 1px solid #acacac; border-left-width: 0; border-bottom: 0; }
.page-tabs .current { position: relative; height: 22px; padding: 0 7px 3px; margin-bottom: -1px; background: #fff; border-left-width: 1px; }
.pane { display: flex; flex-direction: column; flex: 1; margin: 0 6px 4px 6px; padding: 6px 6px 1px; border: 1px solid #acacac; min-height: 0; }
.canvas { flex: 1; display: flex; padding: 19px; background: #ababab; border: 1px solid #666; min-height: 0; }
.page { flex: 1; padding-top: 20px; background: #fff; border: 1px solid #000; box-shadow: 4px 4px 4px rgba(0, 0, 0, .4); }
.flow { display: flex; flex-direction: column; align-items: center; padding-right: 1px; }
.link.lead { margin-top: 2px; }
.node { display: flex; justify-content: center; align-items: center; gap: 3px; height: 32px; border: 3px solid; font: 11px/16px var(--sans); }
.ok { border-color: #00a000; }
.bad { border-color: #e00028; }
.n1 { width: 120px; }
.n2 { width: 162px; }
.n3 { width: 138px; }
.stop { margin-top: 4px; }
.legend { display: flex; align-items: center; justify-content: space-between; height: 25px; font: 11px/16px var(--sans); }
.legend ul { display: flex; gap: 15px; list-style: none; }
.legend li { display: flex; align-items: center; gap: 2px; }
.legend i { width: 19px; height: 13px; }
.c-done { background: #00a000; }
.c-run { background: #00f; }
.c-warn { background: orange; }
.c-err { background: #e00028; }
.c-cancel { background: #a800e0; }
.select { display: flex; align-items: center; width: 121px; height: 21px; padding-right: 3px; background: linear-gradient(#f0f0f0, #e4e4e4); border: 1px solid #acacac; }
.select select { appearance: none; flex: 1; padding-left: 4px; }

.right { display: flex; flex-direction: column; background: var(--pale); }
.props { margin: auto 0; padding-top: 2px; text-align: center; font: 11px/16px var(--sans); }

.statusbar { display: flex; justify-content: space-between; height: 22px; flex: none; padding: 0 17px 0 4px; border-top: 1px solid #fff; line-height: 21px; }

.taskbar { position: relative; display: flex; align-items: center; gap: 4px; height: 40px; flex: none; background: #2850a0; color: #fff; }
.ghost { position: absolute; inset: 0 0 auto 0; display: flex; height: 12px; padding-left: 8px; overflow: hidden; background: #3a5c94; border-bottom: 1px solid #6480b0; color: #8ba0c6; font: 12px/16px var(--ui); }
.ghost span { margin-top: -9px; }
.g1 { width: 82px; }
.g2 { width: 75px; }
.g-views { margin-left: auto; }
.g3 { width: 43px; }
.task { position: relative; display: flex; justify-content: center; align-items: center; width: 58px; height: 39px; border: 1px solid transparent; }
.start { width: 48px; padding-left: 2px; }
.open { background: rgba(150, 175, 215, .4); border-color: rgba(200, 215, 240, .5); }
.front { background: rgba(195, 205, 230, .65); border-color: #d8e0f0; }
.tray { position: relative; display: flex; align-items: center; gap: 10px; margin-left: auto; padding-right: 16px; }
.clock { display: flex; flex-direction: column; align-items: center; margin-left: 4px; font: 12px/17px var(--ui); }
```
